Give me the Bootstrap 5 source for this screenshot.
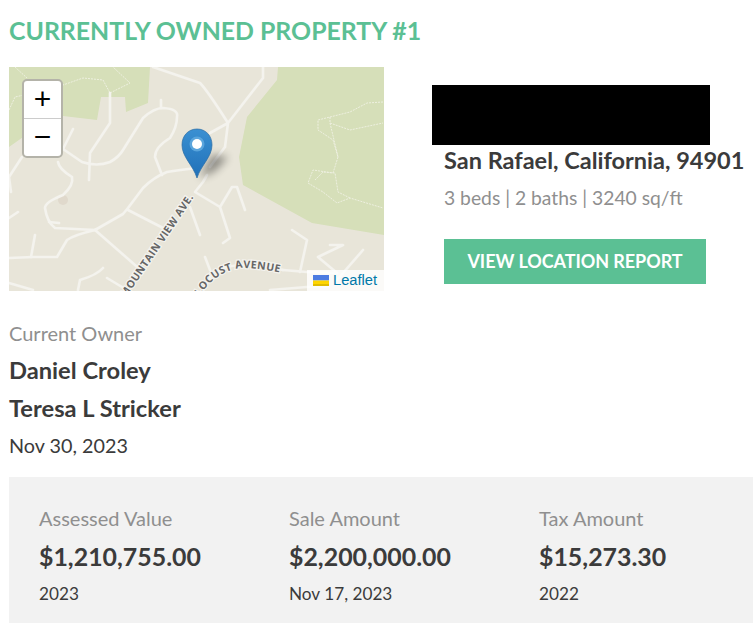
<!DOCTYPE html>
<html lang="en">
<head>
<meta charset="utf-8">
<title>Currently Owned Property</title>
<link href="https://cdn.jsdelivr.net/npm/bootstrap@5.3.0/dist/css/bootstrap.min.css" rel="stylesheet">
<style>
html,body{height:623px;overflow:hidden;background:#fff}
body{font-family:Lato,"Open Sans",sans-serif;color:#3b3b3b;padding-left:9px}
.prop-title{font-size:24.85px;line-height:29px;font-weight:700;color:#5bc094;margin:0;padding-top:16px;height:67px;text-transform:uppercase}
.prop-top{height:224px}
.map-box{width:375px;height:224px;background:#e8e5d9;overflow:hidden;flex:none}
.map-svg{display:block;width:375px;height:224px}
.zoom-ctl{top:12px;left:13px;width:41px;border:2px solid #b4b3a9;border-radius:5px;background:#fff;overflow:hidden}
.zoom-ctl span{display:block;height:37px;text-align:center;font:400 30px/36px "Liberation Sans",sans-serif;color:#000}
.zoom-ctl span+span{height:38px;border-top:1px solid #ccc}
.attr{right:0;bottom:0;height:21px;width:77px;background:rgba(255,255,255,.8);font:14.7px/21px "Liberation Sans",sans-serif;color:#0078a8;padding-left:6px;gap:4px}
.flag{display:block;width:16px;height:11px}
.info-col{padding-left:60px;padding-top:18px}
.redact{width:278px;height:60px;background:#000;margin-left:-12px}
.addr{font-size:23.5px;line-height:32px;font-weight:700;margin:-1px 0 0}
.specs{font-size:19.3px;line-height:26px;color:#8f8f8f;margin:9px 0 0}
.btn.report{background:#5bc094;border:0;border-radius:0;color:#fff;font-size:18px;font-weight:700;width:262px;height:45px;line-height:45px;padding:0;margin-top:28px;text-transform:uppercase;letter-spacing:-.07px}
.owner-block{padding-top:29px;height:186px}
.lbl{font-size:20px;line-height:26px;color:#8f8f8f;margin:0}
.nm{font-size:23.7px;line-height:30px;font-weight:700;margin:9px 0 0}
.nm+.nm{margin-top:8px}
.dt{font-size:19.8px;line-height:26px;margin:9px 0 0}
.stat-panel{background:#f2f2f2;height:146px;padding:28px 0 0 30px}
.stat-col{width:250px;flex:none}
.val{font-size:24.9px;line-height:30px;font-weight:700;margin:10px 0 0}
.yr{font-size:17.2px;line-height:24px;margin:11px 0 0}
</style>
</head>
<body>
<h1 class="prop-title">Currently Owned Property #1</h1>
<div class="d-flex prop-top">
  <div class="map-box position-relative">
    <svg class="map-svg" viewBox="0 0 375 224" xmlns="http://www.w3.org/2000/svg">
      <defs>
        <filter id="blur1" x="-50%" y="-50%" width="200%" height="200%"><feGaussianBlur stdDeviation="4"/></filter>
        <filter id="soft"><feGaussianBlur stdDeviation=".5"/></filter>
        <linearGradient id="pinfill" x1="0" y1="0" x2="0" y2="1"><stop offset="0" stop-color="#3a90d2"/><stop offset="1" stop-color="#2070b8"/></linearGradient>
        <path id="locust" d="M190 231 Q203 206 231 201 Q255 201 280 208"/>
      </defs>
      <rect width="375" height="224" fill="#e8e5d9"/>
      <g fill="#d6dfb9" filter="url(#soft)">
        <polygon points="0,0 141,0 139,36 117,45 116,30 92,30 88,53 54,49 34,56 0,80"/>
        <polygon points="269,0 268,13 238,50 230,90 234,118 303,156 375,168 375,0"/>
      </g>
      <g fill="none" stroke="#eef0e0" stroke-width="1" stroke-dasharray="2 1" stroke-linejoin="round">
        <path d="M374 35 L358 36 L341 45 L321 50 L309 53 L309 63 L324 73 L329 90 L324 106 L304 103 L299 116 L314 125 L328 136 L341 131 L374 141"/>
        <path d="M321 50 L321 56 L341 63 L374 56 M321 56 L329 90"/>
        <path d="M306 113 L314 105 L326 106 L329 125 L341 131"/>
        <path d="M0 43 L6 30 L24 26 L54 18 L74 11 L94 13 L101 26 L121 16 L104 0 M6 0 L18 11"/>
      </g>
      <circle cx="54" cy="133" r="5" fill="#e0d9cc"/>
      <g fill="none" stroke="#f4f3ee" stroke-width="2.600" stroke-linecap="round" stroke-linejoin="round" filter="url(#soft)">
        <path d="M54 82 L73 95 Q88 100 101 95 Q110 90 114 83 L134 51 Q145 41 154 41 Q170 42 168 50 Q168 60 161 71 Q146 80 146 90 L153 108"/>
        <path d="M152 33 L152 41 M64 62 L54 82"/>
        <path d="M101 26 L101 56 L81 86 L80 113"/>
        <path d="M188 101 Q170 103 158 105 Q145 110 134 121 L119 141 L114 147 L86 163 Q65 168 58 173 L48 190 L24 190 L0 191"/>
        <path d="M49 95 Q50 102 63 110 Q65 118 54 128 Q36 135 36 141 Q38 155 46 161 L86 163"/>
        <path d="M40 155 L50 156 M86 163 L134 205 M119 143 L158 163 M26 168 L22 190"/>
        <path d="M94 201 Q88 208 71 213 L69 223 M98 211 L118 223 M0 110 L13 90 M0 110 L2 125 M0 151 L9 145 M0 216 L24 223"/>
        <path d="M144 0 L191 16 Q198 23 219 56 M254 0 L254 11 L219 56 L216 80 L201 100 M201 66 L219 56"/>
        <path d="M198 108 L194 115 L186 125 L211 140 L223 120 L228 120 L236 143 M211 140 L221 171 L214 176 M181 140 L191 168"/>
        <path d="M283 163 L298 173 L291 205 M309 190 L334 178 L321 178 M309 190 L328 206 M354 183 L328 213 M196 190 L201 203"/>
        <path d="M274 203 L298 205 L328 206 M261 223 L298 220 L320 220"/>
        <path d="M194 224 Q203 206 204 206 Q216 199 231 198 Q255 198 274 203"/>
      </g>
      <g font-family="'Open Sans',sans-serif" font-size="10.5" font-weight="700" fill="#666" stroke="#f4f3ee" stroke-width="2.500" paint-order="stroke" letter-spacing=".4">
        <text transform="translate(185 130) rotate(-56)" text-anchor="end">MOUNTAIN VIEW AVE.</text>
        <text><textPath href="#locust" startOffset="2">LOCUST AVENUE</textPath></text>
      </g>
      <polygon points="190,111 203,88 219,90 206,104" fill="#000" opacity=".4" filter="url(#blur1)"/>
      <path d="M188 111 C184 98 173 90 173 78 C173 69 179 62 188 62 C197 62 203 69 203 78 C203 90 192 98 188 111Z" fill="url(#pinfill)" stroke="#2a6ca3" stroke-width=".7"/>
      <circle cx="188" cy="77" r="7.500" fill="#5aa5dc"/>
      <circle cx="188" cy="77" r="5" fill="#fff"/>
    </svg>
    <div class="zoom-ctl position-absolute"><span>+</span><span>&#8722;</span></div>
    <div class="attr position-absolute d-flex align-items-center">
      <svg class="flag" viewBox="0 0 16 11" xmlns="http://www.w3.org/2000/svg"><rect width="16" height="5.500" fill="#4c7be1"/><rect y="5.500" width="16" height="3.500" fill="#ffd500"/><rect y="9" width="16" height="2" fill="#e0bc00"/></svg>
      <span>Leaflet</span>
    </div>
  </div>
  <div class="info-col">
    <div class="redact"></div>
    <p class="addr">San Rafael, California, 94901</p>
    <p class="specs">3 beds | 2 baths | 3240 sq/ft</p>
    <a class="btn report" href="#">View Location Report</a>
  </div>
</div>
<div class="owner-block">
  <p class="lbl">Current Owner</p>
  <p class="nm">Daniel Croley</p>
  <p class="nm">Teresa L Stricker</p>
  <p class="dt">Nov 30, 2023</p>
</div>
<div class="stat-panel d-flex">
  <div class="stat-col"><p class="lbl">Assessed Value</p><p class="val">$1,210,755.00</p><p class="yr">2023</p></div>
  <div class="stat-col"><p class="lbl">Sale Amount</p><p class="val">$2,200,000.00</p><p class="yr">Nov 17, 2023</p></div>
  <div class="stat-col"><p class="lbl">Tax Amount</p><p class="val">$15,273.30</p><p class="yr">2022</p></div>
</div>
<script src="https://cdn.jsdelivr.net/npm/bootstrap@5.3.0/dist/js/bootstrap.bundle.min.js"></script>
</body>
</html>
